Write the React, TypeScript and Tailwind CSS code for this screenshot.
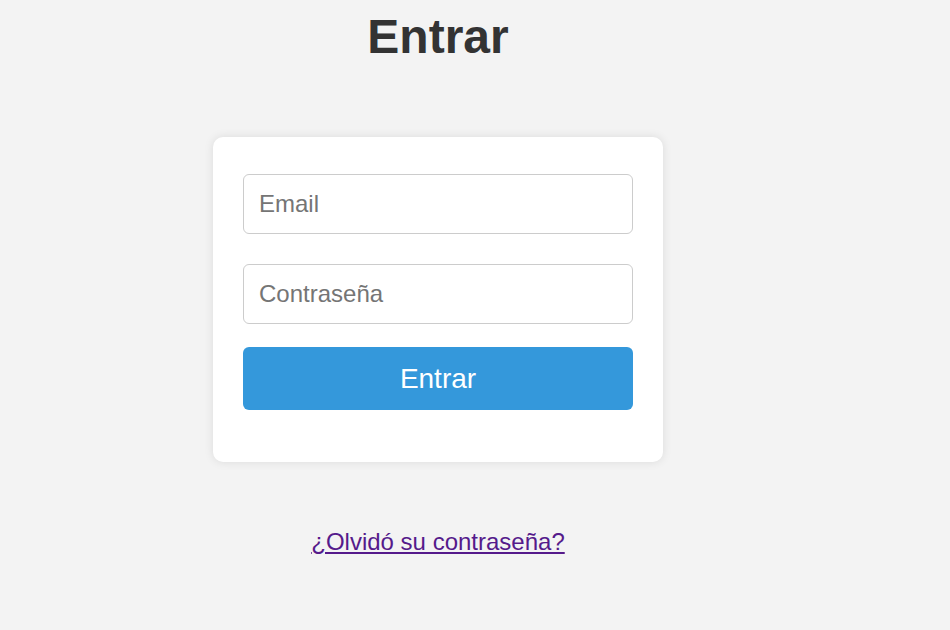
export default function App() {
  return (
    <div className="min-h-[630px] w-full bg-[#f3f3f3]" style={{ fontFamily: '"Liberation Sans", Arial, sans-serif' }}>
      <div className="w-[876px] flex flex-col items-center">
        <h1 className="pt-[1px] text-[48px] font-bold leading-normal text-[#333333]">Entrar</h1>
        <div className="mt-[64px] w-[450px] rounded-[10px] bg-white px-[30px] pt-[37px] pb-[52px] shadow-[0_0_10px_rgba(0,0,0,0.1)]">
          <input
            type="email"
            placeholder="Email"
            className="block h-[60px] w-full rounded-[6px] border border-[#cccccc] px-[15px] text-[24px] text-[#333] placeholder:text-[#757575] outline-none"
          />
          <input
            type="password"
            placeholder="Contraseña"
            className="mt-[30px] block h-[60px] w-full rounded-[6px] border border-[#cccccc] px-[15px] text-[24px] text-[#333] placeholder:text-[#757575] outline-none"
          />
          <button className="mt-[23px] block h-[63px] w-full rounded-[6px] bg-[#3498db] text-[28px] text-white">
            Entrar
          </button>
        </div>
        <a href="#" className="mt-[62px] text-[24px] leading-normal text-[#551a8b] underline">
          ¿Olvidó su contraseña?
        </a>
      </div>
    </div>
  );
}
